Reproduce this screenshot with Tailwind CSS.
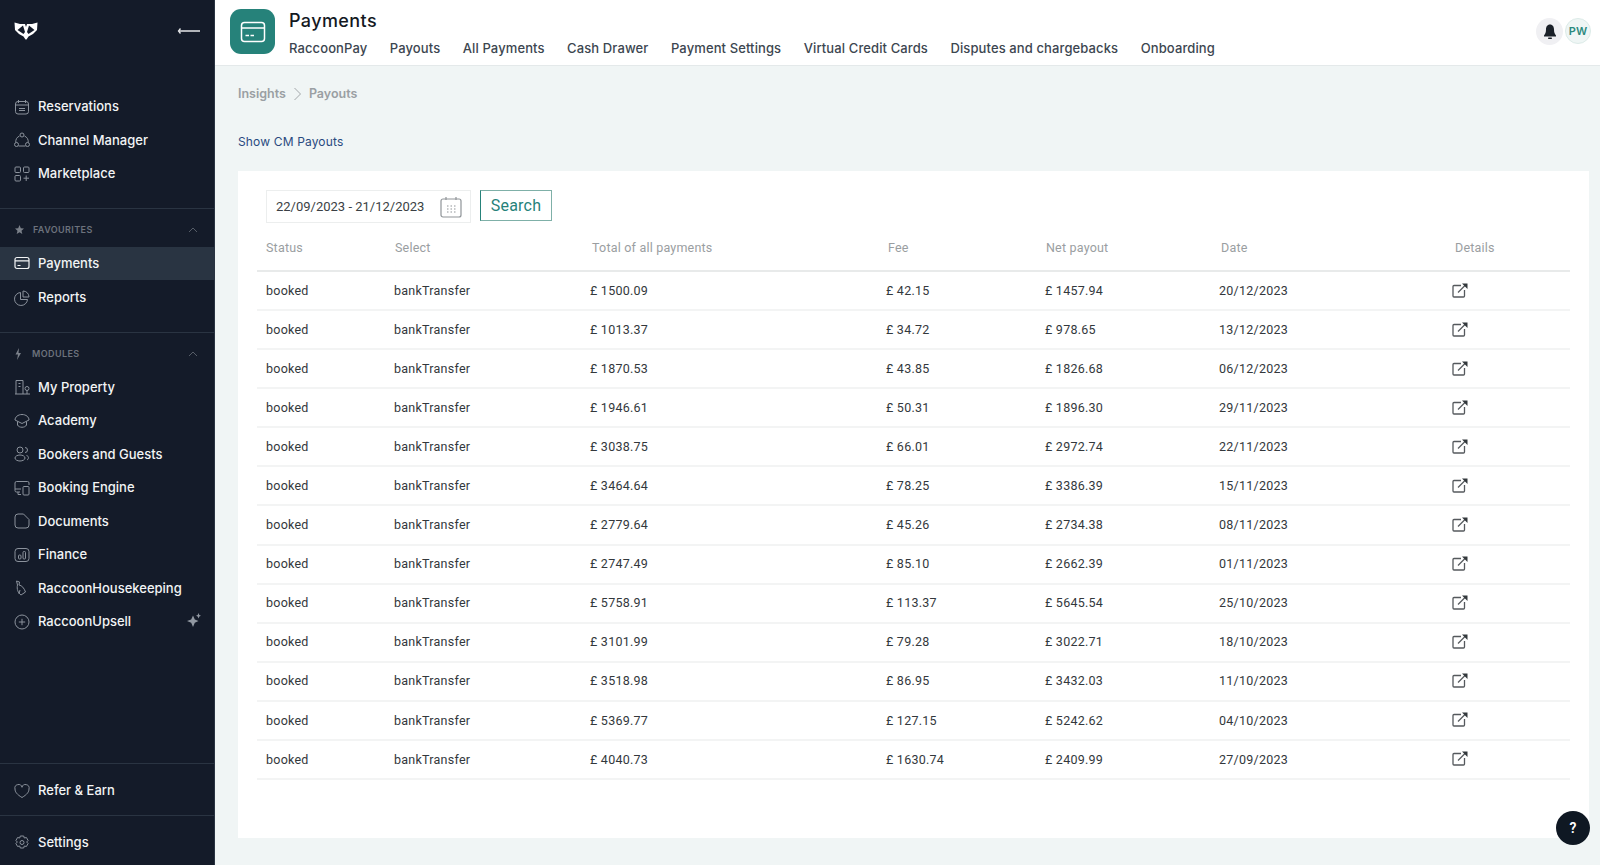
<!DOCTYPE html>
<html lang="en">
<head>
<meta charset="UTF-8" />
<title>Payments</title>
<script src="https://cdn.jsdelivr.net/npm/@tailwindcss/browser@4"></script>
</head>
<body class="font-['Inter',sans-serif] bg-[#f0f5f5] overflow-hidden">
<div class="flex h-[865px] w-[1600px]">

	<!-- sidebar -->
	<aside class="w-[215px] shrink-0 h-full bg-[#141b29] border-r border-[#2a3442] flex flex-col text-[13px] font-medium text-[#f2f4f5]">
		<div class="h-[62px] shrink-0 flex items-center justify-between pl-[14px] pr-[13px]">
			<svg width="24" height="18" viewBox="0 0 24 18" fill="#fff"><path d="M0.500 0.500 L6 2 H18 L23.500 0.500 L23 8 L19 12 L14.500 14.500 L12.500 17.500 H11.500 L9.500 14.500 L5 12 L1 8 Z"/><path fill="#141b29" d="M3.500 8 L9 3.500 L11 10 L9.500 12 Z M20.500 8 L15 3.500 L13 10 L14.500 12 Z M11 2 H13 L12 5 Z"/></svg>
			<svg width="24" height="10" viewBox="0 0 24 10" fill="none" stroke="#e6e8ea"><path d="M3.500 2.500 L1.500 5 L3.500 7.500" stroke-width="1.300"/><path d="M2 5 H23" stroke-width="1.500"/></svg>
		</div>

		<nav class="pt-[28px] pb-[17px] border-b border-[#2a3442]">
			<a class="h-[33.500px] flex items-center gap-2 pl-[14px]"><svg class="w-4 h-4 text-[#8b929c]" viewBox="0 0 16 16" fill="none" stroke="currentColor"><rect x="1.500" y="2.500" width="13" height="12.500" rx="2.500"/><path d="M4.500 1v3M11.500 1v3M2 6h12M5 9.500h6M5 11.500h6"/></svg>Reservations</a>
			<a class="h-[33.500px] flex items-center gap-2 pl-[14px]"><svg class="w-4 h-4 text-[#8b929c]" viewBox="0 0 16 16" fill="none" stroke="currentColor"><circle cx="8" cy="3" r="2"/><circle cx="2.500" cy="12.500" r="2"/><circle cx="13.500" cy="12.500" r="2"/><path d="M5.500 4 A6.500 6.500 0 0 0 1.800 10.500M10.500 4 A6.500 6.500 0 0 1 14.200 10.500M4.500 14 H11.500"/></svg>Channel Manager</a>
			<a class="h-[33.500px] flex items-center gap-2 pl-[14px]"><svg class="w-4 h-4 text-[#8b929c]" viewBox="0 0 16 16" fill="none" stroke="currentColor"><rect x="1" y="1" width="5.500" height="5.500" rx="1"/><rect x="9.500" y="1" width="5.500" height="5.500" rx="1"/><rect x="1" y="9.500" width="5.500" height="5.500" rx="1"/><path d="M12.200 9.500v5.500M9.500 12.200h5.500"/></svg>Marketplace</a>
		</nav>

		<div class="pb-[18px] border-b border-[#2a3442]">
			<div class="h-[38px] pt-[5px] flex items-center pl-[15px] pr-[16px] text-[9px] font-semibold tracking-[0.4px] text-[#6c727c]">
				<svg class="w-[18px] h-[10px]" viewBox="0 0 18 10" fill="#7b818a"><path d="M4.500 0 L5.800 3.200 L9 3.500 L6.500 5.700 L7.300 9 L4.500 7.200 L1.700 9 L2.500 5.700 L0 3.500 L3.200 3.200 Z"/></svg><span class="flex-1">FAVOURITES</span>
				<svg width="10" height="6" viewBox="0 0 10 6" fill="none" stroke="#565d67"><path d="M1 5 L5 1 L9 5"/></svg>
			</div>
			<a class="h-[33.500px] flex items-center gap-2 pl-[14px] bg-[#293442]"><svg class="w-4 h-4" viewBox="0 0 16 16" fill="none" stroke="#f2f4f5" stroke-width="1.200"><rect x="1" y="2.500" width="14" height="11" rx="2"/><path d="M1 5.800h14M3.500 10.500h3"/></svg>Payments</a>
			<a class="h-[33.500px] pt-[2px] flex items-center gap-2 pl-[14px]"><svg class="w-4 h-4 text-[#8b929c]" viewBox="0 0 16 16" fill="none" stroke="currentColor"><path d="M6.500 2.500 A6.500 6.500 0 1 0 13.500 9.500 H6.500 Z"/><path d="M9 1 A6 6 0 0 1 15 7 H9 Z"/></svg>Reports</a>
		</div>

		<div class="flex-1 border-b border-[#2a3442]">
			<div class="h-[35px] mt-[3px] pt-[1px] flex items-center pl-[14px] pr-[16px] text-[9px] font-semibold tracking-[0.4px] text-[#6c727c]">
				<svg class="w-[18px] h-[12px]" viewBox="0 0 18 12" fill="#7b818a"><path d="M5 0 L1.500 6.500 H4 L3 12 L7 5 H4.500 Z"/></svg><span class="flex-1">MODULES</span>
				<svg width="10" height="6" viewBox="0 0 10 6" fill="none" stroke="#565d67"><path d="M1 5 L5 1 L9 5"/></svg>
			</div>
			<a class="h-[33.500px] flex items-center gap-2 pl-[14px]"><svg class="w-4 h-4 text-[#8b929c]" viewBox="0 0 16 16" fill="none" stroke="currentColor"><path d="M1 15h15M2 15V1.500h7V15M4.500 4.500h2M4.500 7.500h2"/><circle cx="13" cy="9.500" r="2"/><path d="M13 11.500V15"/></svg>My Property</a>
			<a class="h-[33.500px] flex items-center gap-2 pl-[14px]"><svg class="w-4 h-4 text-[#8b929c]" viewBox="0 0 16 16" fill="none" stroke="currentColor"><path d="M8 1.500 C12 1.500 15 4 15 7 L8 10.500 L1 7 C1 4 4 1.500 8 1.500Z"/><path d="M3.500 8.500 V12 C5 15 11 15 12.500 12 V8.500"/></svg>Academy</a>
			<a class="h-[33.500px] flex items-center gap-2 pl-[14px]"><svg class="w-4 h-4 text-[#8b929c]" viewBox="0 0 16 16" fill="none" stroke="currentColor"><circle cx="6" cy="4" r="3"/><ellipse cx="6" cy="12" rx="5" ry="3"/><path d="M11 1.500 A2.500 2.500 0 0 1 11 6.500M12.500 9.500 C15 10 15 13 13 14"/></svg>Bookers and Guests</a>
			<a class="h-[33.500px] flex items-center gap-2 pl-[14px]"><svg class="w-4 h-4 text-[#8b929c]" viewBox="0 0 16 16" fill="none" stroke="currentColor"><path d="M6 12H2.500a1.500 1.500 0 0 1-1.500-1.500V3a1.500 1.500 0 0 1 1.500-1.500h11A1.500 1.500 0 0 1 15 3v2M1 9h6M4 12v2.500h3"/><rect x="9" y="6.500" width="6" height="8.500" rx="1"/></svg>Booking Engine</a>
			<a class="h-[33.500px] flex items-center gap-2 pl-[14px]"><svg class="w-4 h-4 text-[#8b929c]" viewBox="0 0 16 16" fill="none" stroke="currentColor"><path d="M4 1h5.500L15 6.500V12a3 3 0 0 1-3 3H4a3 3 0 0 1-3-3V4a3 3 0 0 1 3-3Z"/></svg>Documents</a>
			<a class="h-[33.500px] flex items-center gap-2 pl-[14px]"><svg class="w-4 h-4 text-[#8b929c]" viewBox="0 0 16 16" fill="none" stroke="currentColor"><rect x="1" y="1.500" width="14" height="13" rx="3"/><rect x="4.500" y="8" width="2.500" height="4" rx="1"/><rect x="9" y="4.500" width="2.500" height="7.500" rx="1"/></svg>Finance</a>
			<a class="h-[33.500px] flex items-center gap-2 pl-[14px]"><svg class="w-4 h-4 text-[#8b929c]" viewBox="0 0 16 16" fill="none" stroke="currentColor"><path d="M2.500 1 L5.500 2 L5 5 C8 5.500 10 8 11.500 12 L7 15 C4 13 2.500 9 3.500 5 Z"/><path d="M6 10 L5 14"/></svg>RaccoonHousekeeping</a>
			<a class="h-[33.500px] flex items-center gap-2 pl-[14px] pr-[13px]"><svg class="w-4 h-4 text-[#8b929c]" viewBox="0 0 16 16" fill="none" stroke="currentColor"><circle cx="8" cy="8" r="7"/><path d="M8 4.800v6.400M4.800 8h6.400"/></svg><span class="flex-1">RaccoonUpsell</span><svg class="w-[14px] h-[14px] mb-[4px]" viewBox="0 0 14 14" fill="#9299a2"><path d="M6 2.500 L7.800 6.500 L11.500 8 L7.800 9.800 L6 14 L4.200 9.800 L0 8 L4.200 6.500 Z"/><path d="M11.500 0 L12.300 2 L14 2.800 L12.300 3.500 L11.500 5.500 L10.700 3.500 L9 2.800 L10.700 2 Z"/></svg></a>
		</div>

		<a class="h-[52px] pt-[2px] shrink-0 flex items-center gap-2 pl-[14px] border-b border-[#2a3442]"><svg class="w-4 h-4 text-[#8b929c]" viewBox="0 0 16 16" fill="none" stroke="currentColor"><path d="M8 14.500 C3 11.500 1 9 1 6 A3.600 3.600 0 0 1 8 4.300 A3.600 3.600 0 0 1 15 6 C15 9 13 11.500 8 14.500Z"/></svg>Refer &amp; Earn</a>
		<a class="h-[49px] pt-[4px] shrink-0 flex items-center gap-2 pl-[14px]"><svg class="w-4 h-4 text-[#8b929c]" viewBox="0 0 16 16" fill="none" stroke="currentColor"><path d="M6.300 1h3.400l.6 2 2.100-.5 1.700 3-1.500 1.500 1.500 1.500-1.700 3-2.100-.5-.6 2H6.300l-.6-2-2.100.5-1.700-3L3.400 7 1.900 5.500l1.700-3 2.100.5Z"/><circle cx="8" cy="7.500" r="2"/></svg>Settings</a>
	</aside>

	<main class="flex-1 min-w-0 flex flex-col relative">
		<!-- top bar -->
		<header class="h-[66px] shrink-0 bg-white border-b border-[#e4e9ea] flex pl-[15px] pr-[9px]">
			<div class="w-[45px] h-[45px] mt-[9px] rounded-[11px] bg-[#26827a] flex items-center justify-center">
				<svg width="26" height="22" viewBox="0 0 26 22" fill="none" stroke="#fff" stroke-width="1.500"><rect x="1.500" y="1.500" width="23" height="19" rx="3"/><path d="M1.500 7h23M5.500 14.500h3.500M10.500 14.500h3.500"/></svg>
			</div>
			<div class="ml-[14px] flex-1">
				<h1 class="mt-[9px] text-[18px] leading-[24px] font-medium text-[#14191f] tracking-[0.4px]">Payments</h1>
				<nav class="mt-[6px] flex gap-[22.500px] text-[13px] leading-[18px] text-[#3c4650] font-medium tracking-[0.11px]">
					<a>RaccoonPay</a><a>Payouts</a><a>All Payments</a><a>Cash Drawer</a><a>Payment Settings</a><a>Virtual Credit Cards</a><a>Disputes and chargebacks</a><a>Onboarding</a>
				</nav>
			</div>
			<div class="flex gap-[2px] mt-[18px]">
				<div class="w-[27px] h-[27px] rounded-full bg-[#f0f0f3] flex items-center justify-center">
					<svg width="14" height="16" viewBox="0 0 14 16" fill="#1b2129"><path d="M7 0.500 C9.800 0.500 11 3 11 5.500 C11 8.500 11.700 10 13 11.500 V12.500 H1 V11.500 C2.300 10 3 8.500 3 5.500 C3 3 4.200 0.500 7 0.500Z"/><rect x="5" y="13.500" width="4" height="1.500" rx=".7"/></svg>
				</div>
				<div class="w-[26px] h-[26px] rounded-full bg-[#eff6f5] border border-[#dcebe8] flex items-center justify-center text-[11px] font-semibold text-[#2b8a7e]">PW</div>
			</div>
		</header>

		<!-- content -->
		<div class="flex-1 pl-[23px] pr-[11px]">
			<div class="h-[18px] mt-[19px] flex items-center gap-[7px] text-[12.500px] font-semibold text-[#9a9fa3]">
				Insights
				<svg width="9" height="14" viewBox="0 0 9 14" fill="none" stroke="#a4a8ab"><path d="M1.500 1 L7.500 7 L1.500 13"/></svg>
				Payouts
			</div>
			<a class="block mt-[31px] text-[12px] leading-[16px] text-[#2a4a7f] tracking-[0.15px]">Show CM Payouts</a>

			<section class="mt-[21px] h-[667px] bg-white pl-[19px] pr-[19px] font-['Roboto',sans-serif]">
				<div class="flex pt-[19px] pl-[9px]">
					<div class="w-[205px] h-[33px] border border-[#eceeee] flex items-center justify-between pl-[9px] pr-[8px] text-[13px] text-[#3a3f44]">
						22/09/2023 - 21/12/2023
						<svg width="22" height="22" viewBox="0 0 22 22" fill="none" stroke="#8f9498" stroke-width="1.200"><rect x="1" y="3" width="20" height="18" rx="2"/><path d="M6 1v3M16 1v3"/><path stroke-dasharray="1.500 2" d="M7 10h9M7 13h9M7 16h9"/></svg>
					</div>
					<button class="ml-[9px] w-[72px] h-[31px] border border-[#7fb0a8] border-l-[#26827a] text-[16px] leading-none text-[#26827a] tracking-[0.2px]">Search</button>
				</div>
				<div id="head" class="grid grid-cols-[129px_197px_296px_158px_175px_234px_1fr] pl-[9px] h-[44px] pb-[1px] items-center mt-[5px] text-[12.500px] text-[#9a9ea1] border-b-2 border-[#e8eaea] tracking-[0.2px]">
					<span>Status</span><span>Select</span><span>Total of all payments</span><span>Fee</span><span>Net payout</span><span>Date</span><span>Details</span>
				</div>
				<div id="rows"></div>
			</section>
		</div>

		<button class="absolute right-[10px] bottom-[20px] w-[34px] h-[34px] rounded-full bg-[#0f1823] text-white text-[14px] font-semibold font-['Roboto',sans-serif] flex items-center justify-center">?</button>
	</main>
</div>

<script>
	const payouts = [
		["1500.09", "42.15", "1457.94", "20/12/2023"],
		["1013.37", "34.72", "978.65", "13/12/2023"],
		["1870.53", "43.85", "1826.68", "06/12/2023"],
		["1946.61", "50.31", "1896.30", "29/11/2023"],
		["3038.75", "66.01", "2972.74", "22/11/2023"],
		["3464.64", "78.25", "3386.39", "15/11/2023"],
		["2779.64", "45.26", "2734.38", "08/11/2023"],
		["2747.49", "85.10", "2662.39", "01/11/2023"],
		["5758.91", "113.37", "5645.54", "25/10/2023"],
		["3101.99", "79.28", "3022.71", "18/10/2023"],
		["3518.98", "86.95", "3432.03", "11/10/2023"],
		["5369.77", "127.15", "5242.62", "04/10/2023"],
		["4040.73", "1630.74", "2409.99", "27/09/2023"],
	];
	document.getElementById("rows").innerHTML = payouts.map((p) => `
		<div class="grid grid-cols-[128px_196px_296px_159px_174px_233px_1fr] pl-[9px] pt-[1px] h-[39.080px] items-center border-b-2 border-[#f3f4f4] text-[12.500px] text-[#33383c] tracking-[0.25px]">
			<span>booked</span><span>bankTransfer</span><span>£ ${p[0]}</span><span>£ ${p[1]}</span><span>£ ${p[2]}</span><span>${p[3]}</span>
			<svg class="mb-[2px]" width="16" height="15" viewBox="0 0 16 15" fill="none" stroke="#55595d" stroke-width="1.300"><path d="M9 2.500H2a1 1 0 0 0-1 1V13a1 1 0 0 0 1 1h9.500a1 1 0 0 0 1-1V7"/><path d="M6 9.500 L14 1.500"/><path d="M10 0.500 H15.500 V6 Z" stroke="none" fill="#33383c"/></svg>
		</div>`).join("");
</script>
</body>
</html>
